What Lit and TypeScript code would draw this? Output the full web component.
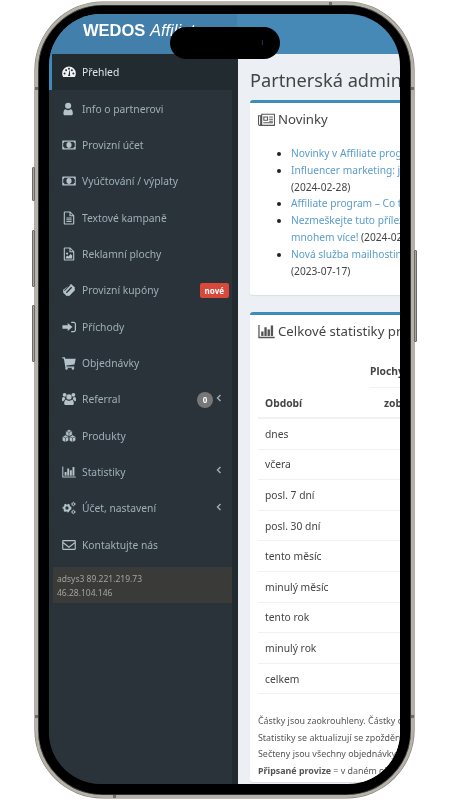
import { LitElement, html, css, svg } from "lit";
import { customElement } from "lit/decorators.js";

const cube = (x: number, y: number) => svg`
  <path d="M${x} ${y - 4.2}l3.700 1.700v4.600L${x} ${y + 4.200}l-3.700-1.700v-4.600Z" stroke="#293339" stroke-width=".7"/>
  <path d="M${x - 3.700} ${y - 2.500}L${x} ${y - 0.800}l3.700-1.700M${x} ${y - 0.800}v5" fill="none" stroke="#293339" stroke-width=".7"/>`;

const gear = (x: number, y: number, r: number, t: number) => svg`
  <circle cx=${x} cy=${y} r=${r} fill="none" stroke="currentColor" stroke-width=${r * 0.75}/>
  <circle cx=${x} cy=${y} r=${r * 1.45} fill="none" stroke="currentColor" stroke-width=${r * 0.5} stroke-dasharray=${t}/>`;

const icons: Record<string, any> = {
  dashboard: svg`<path fill-rule="evenodd" d="M8 1.800A7.800 7.800 0 0 0 .2 9.600c0 1.400.3 2.700 1 3.800.1.200.3.300.5.300h12.600c.2 0 .4-.1.500-.3.700-1.100 1-2.400 1-3.800A7.800 7.800 0 0 0 8 1.800ZM3 10.900a1.100 1.100 0 1 1 0-2.200 1.100 1.100 0 0 1 0 2.200Zm1.700-3.800a1.100 1.100 0 1 1 0-2.200 1.100 1.100 0 0 1 0 2.200ZM8 5.400a1.100 1.100 0 1 1 0-2.200 1.100 1.100 0 0 1 0 2.200Zm1.300 7.300H6.700L7.500 11l1-4.600h.7l-.1 4.700c.3.400.4 1 .2 1.600Zm2-5.600a1.100 1.100 0 1 1 0-2.200 1.100 1.100 0 0 1 0 2.200Zm1.700 3.800a1.100 1.100 0 1 1 0-2.200 1.100 1.100 0 0 1 0 2.200Z"/>`,
  user: svg`<circle cx="7" cy="4.300" r="3.500"/><path d="M3.300 15c-1 0-1.700-.7-1.700-1.700 0-2.700.7-5.100 2.700-5.100.8.700 1.600 1.100 2.700 1.100s1.900-.4 2.700-1.100c2 0 2.700 2.400 2.700 5.100 0 1-.7 1.700-1.700 1.700Z"/>`,
  money: svg`<path fill-rule="evenodd" d="M1 2.800h14c.4 0 .7.300.7.700v9c0 .4-.3.700-.7.700H1c-.4 0-.7-.3-.7-.7v-9c0-.4.300-.7.700-.7Zm1.600 1.500c0 .9-.7 1.500-1.200 1.500v4.400c.8 0 1.400.6 1.400 1.500h10.400c0-.9.600-1.500 1.400-1.500V5.800c-.5 0-1.200-.6-1.200-1.500ZM8 4.600c1.800 0 3 1.500 3 3.400s-1.200 3.400-3 3.400S5 9.900 5 8s1.200-3.400 3-3.400Z"/><rect x="7.200" y="6" width="1.600" height="4"/>`,
  file: svg`<path fill-rule="evenodd" d="M3 .5h6.500L14 5V14.700c0 .5-.3.800-.8.800H2.800c-.5 0-.8-.3-.8-.8V1.300c0-.5.500-.8 1-.8Zm.3 1.300v12.400h9.400V6H8.500V1.800Zm6.500.5V4.800h2.400ZM5 7.500h6v1H5Zm0 2h6v1H5Zm0 2h6v1H5Z"/>`,
  image: svg`<path fill-rule="evenodd" d="M3 .5h6.500L14 5V14.700c0 .5-.3.800-.8.800H2.800c-.5 0-.8-.3-.8-.8V1.300c0-.5.500-.8 1-.8Zm.3 1.300v12.400h9.400V6H8.500V1.800Zm6.500.5V4.800h2.400Z"/><circle cx="5.800" cy="7.500" r="1.300"/><path d="M4.400 13v-1.700l1.700-1.500 1.100 1.100 2.700-2.900 1.700 1.700V13Z"/>`,
  ticket: svg`<path fill-rule="evenodd" d="M10.500 1 15 5.500c-.7.700-.7 1.800 0 2.500L8 15c-.7-.7-1.800-.7-2.500 0L1 10.500c.7-.7.7-1.800 0-2.500Zm0 3.400L4.400 10.500 5.500 11.600l6.100-6.100ZM3 9 9.500 2.500 8.900 1.900 2.400 8.400Z"/>`,
  signin: svg`<path d="M6.500 3.500V6H.5v4h6v2.500L12 8Z"/><path d="M10.500 2h2.700C14.800 2 16 3.200 16 4.800v6.400c0 1.600-1.200 2.800-2.800 2.800h-2.700v-1.400h2.700c.8 0 1.400-.6 1.400-1.400V4.800c0-.8-.6-1.400-1.400-1.400h-2.700Z"/>`,
  cart: svg`<path d="M.3 1.500h3l.5 1.600H15.700L14.300 9.800 4.900 10.900 5.200 12H14v1.300H3.900L2.100 2.800H.3Z"/><circle cx="5.200" cy="14.200" r="1.400"/><circle cx="12.500" cy="14.200" r="1.400"/>`,
  users: svg`<circle cx="8" cy="5.600" r="3"/><circle cx="3" cy="3.200" r="2.200"/><circle cx="13" cy="3.200" r="2.200"/><path d="M3.800 14.800c-.8 0-1.300-.5-1.300-1.300 0-2.300.5-4.700 2.400-4.700.7.700 1.900 1.200 3.100 1.200s2.400-.5 3.100-1.200c1.900 0 2.400 2.400 2.400 4.700 0 .8-.5 1.300-1.300 1.300Z"/><path d="M0 8.500c0-1.500.3-2.900 1.600-2.900.4.300.9.500 1.400.5.100.8.400 1.600 1 2.100-1.200.3-1.900 1.100-2.300 2.300H.9c-.5 0-.9-.4-.9-1Zm16 0c0-1.500-.3-2.900-1.600-2.900-.4.300-.9.500-1.400.5-.1.800-.4 1.600-1 2.100 1.200.3 1.900 1.100 2.300 2.300h.8c.5 0 .9-.4.900-1Z"/>`,
  cubes: svg`${cube(8, 4.700)}${cube(4, 11)}${cube(12, 11)}`,
  chart: svg`<path d="M.3 1.800h1.200v11.200h14.200v1.300H.3Z"/><rect x="3" y="8" width="2.200" height="4.200"/><rect x="6" y="4" width="2.200" height="8.200"/><rect x="9" y="6" width="2.200" height="6.200"/><rect x="12" y="2.300" width="2.200" height="9.900"/>`,
  cogs: svg`${gear(5.700, 8, 3, 2.100)}${gear(13, 3.500, 1.500, 1.100)}${gear(13, 12.500, 1.500, 1.100)}`,
  mail: svg`<path fill-rule="evenodd" d="M1.500 2.300h13c.7 0 1.300.6 1.300 1.300v8.800c0 .7-.6 1.300-1.300 1.300h-13c-.7 0-1.300-.6-1.300-1.300V3.600c0-.7.600-1.300 1.300-1.300Zm0 1.300v1.100L8 9.700l6.500-5V3.600Zm0 2.800v6h13v-6L8 11.300Z"/>`,
  news: svg`<path fill-rule="evenodd" d="M3 2.500h12.500c.3 0 .5.200.5.500v10.500c0 .3-.2.500-.5.500H1.500C.7 14 0 13.300 0 12.500V4h3Zm1 1v9c0 .2 0 .4-.1.500H15V3.500ZM1 5v7.500c0 .3.200.5.500.500s.5-.2.500-.5V5Zm4 .2h4.500v4H5Zm1 1v2h2.500v-2Zm4.500-1H14v1h-3.500Zm0 2H14v1h-3.500Zm0 2H14v1h-3.500ZM5 10.500h9v1H5Z"/>`,
};

const icon = (name: string) =>
  html`<svg class="ico" viewBox="0 0 16 16" fill="currentColor" aria-hidden="true">${icons[name]}</svg>`;

const menu = [
  { i: "dashboard", t: "Přehled", active: true },
  { i: "user", t: "Info o partnerovi" },
  { i: "money", t: "Provizní účet" },
  { i: "money", t: "Vyúčtování / výplaty" },
  { i: "file", t: "Textové kampaně" },
  { i: "image", t: "Reklamní plochy" },
  { i: "ticket", t: "Provizní kupóny", label: "nové" },
  { i: "signin", t: "Příchody" },
  { i: "cart", t: "Objednávky" },
  { i: "users", t: "Referral", badge: "0", chev: true },
  { i: "cubes", t: "Produkty" },
  { i: "chart", t: "Statistiky", chev: true },
  { i: "cogs", t: "Účet, nastavení", chev: true },
  { i: "mail", t: "Kontaktujte nás" },
];

const periods = ["dnes", "včera", "posl. 7 dní", "posl. 30 dní", "tento měsíc", "minulý měsíc", "tento rok", "minulý rok", "celkem"];

@customElement("app-root")
export class AppRoot extends LitElement {
  static styles = css`
    :host {
      display: block;
      width: 450px;
      height: 802px;
      background: #fff;
      padding: 2px 36px 4px 35px;
      box-sizing: border-box;
      overflow: hidden;
      font-family: "Noto Sans", "Open Sans", sans-serif;
    }
    .phone {
      position: relative;
      width: 379px;
      height: 796px;
      box-sizing: border-box;
      padding: 9px 11px;
      background: #000;
      border: 3px solid #b5b2aa;
      border-radius: 68px;
      box-shadow: 0 0 0 0.6px #7b7971, inset 0 0 0 0.6px #5d5b55;
    }
    .btn { position: absolute; background: #a8a59d; border: 0.5px solid #6c6a64; box-sizing: border-box; width: 3px; border-radius: 1px; }
    .b1 { left: -6px; top: 162px; height: 34px; }
    .b2 { left: -6px; top: 225px; height: 57px; }
    .b3 { left: -6px; top: 300px; height: 57px; }
    .b4 { right: -6px; top: 245px; height: 92px; }
    .notch { position: absolute; background: #6f6d67; }
    .n1 { left: -3px; top: 82px; width: 3px; height: 3px; }
    .n2 { right: -3px; top: 82px; width: 3px; height: 3px; }
    .n3 { left: -3px; top: 710px; width: 3px; height: 3px; }
    .n4 { right: -3px; top: 710px; width: 3px; height: 3px; }
    .n5 { left: 291px; top: -3px; width: 3px; height: 3px; }
    .n6 { left: 75px; bottom: -3px; width: 3px; height: 3px; }
    .island {
      position: absolute;
      left: 132px;
      top: 22px;
      width: 110px;
      height: 32px;
      border-radius: 16px;
      background: #000;
      z-index: 3;
    }
    .island i {
      position: absolute;
      left: 92px;
      top: 13px;
      width: 1px;
      height: 5px;
      background: #2c2c52;
    }
    .screen {
      width: 351px;
      height: 770px;
      border-radius: 52px;
      overflow: hidden;
      display: flex;
      flex-direction: column;
      background: #222b30;
      filter: blur(0.3px);
    }
    .top { flex: none; height: 40px; display: flex; background: #4689b6; }
    .logo {
      flex: none;
      width: 188px;
      box-sizing: border-box;
      padding: 0 0 7px 34px;
      background: #427fab;
      color: #fff;
      font: bold 16.500px/33px "Liberation Sans", sans-serif;
      white-space: nowrap;
      overflow: hidden;
    }
    .logo em { font-weight: normal; }
    .body { flex: 1; display: flex; min-height: 0; }
    .side { flex: none; width: 183px; background: #293339; border-right: 6px solid #222b30; }
    .item {
      height: 36.350px;
      box-sizing: border-box;
      display: flex;
      align-items: center;
      padding-left: 13px;
      color: #9fb0b9;
      font-size: 10.300px;
      white-space: nowrap;
    }
    .item.active { background: #222b30; color: #dde5e9; border-left: 3px solid #3c8dbc; padding-left: 10px; }
    .item .ico { width: 14px; height: 14px; flex: none; margin-right: 6px; color: #b4c2ca; }
    .item.active .ico { color: #eef2f4; }
    .item .right { margin-left: auto; display: flex; align-items: center; padding-right: 7px; }
    .label {
      background: #d9493b;
      color: #fff;
      font-size: 8px;
      font-weight: 700;
      line-height: 15px;
      padding: 0 5px;
      border-radius: 2px;
      margin-right: -4px;
    }
    .badge {
      background: #777;
      color: #fff;
      font-size: 8px;
      font-weight: 700;
      width: 16px;
      height: 16px;
      line-height: 16px;
      text-align: center;
      border-radius: 50%;
      margin: 2px 2px 0 0;
    }
    .chev { width: 6px; height: 8px; fill: none; stroke: #9fb0b9; stroke-width: 1.400; margin: 0 3px 3px 1px; }
    .sys {
      margin: 4px 0 0 4px;
      padding: 5px 4px 0;
      height: 36px;
      box-sizing: border-box;
      background: #3a3b39;
      color: #a3a39b;
      font-size: 8.500px;
      line-height: 14.500px;
    }
    .main { flex: none; width: 300px; padding: 0 0 0 12px; box-sizing: border-box; color: #444; background: #ecf0f5; }
    h1 { margin: 14px 0 0; font-size: 18.200px; font-weight: 400; line-height: 24px; color: #444; white-space: nowrap; }
    .card {
      background: #fff;
      border-top: 3px solid #3c8dbc;
      border-radius: 3px;
      width: 290px;
      box-sizing: border-box;
      box-shadow: 0 1px 1px rgba(0, 0, 0, 0.08);
    }
    .news { margin-top: 8px; height: 195px; padding: 6px 8px; }
    .title { display: flex; align-items: center; font-size: 13.200px; line-height: 20px; color: #444; white-space: nowrap; }
    .title .ico { width: 17px; height: 17px; margin-right: 3px; flex: none; color: #555; }
    ul { margin: 16px 0 0; padding: 0 0 0 33px; font-size: 10.200px; line-height: 16.800px; white-space: nowrap; list-style: disc; }
    li::marker { color: #222; }
    a { color: #5a9ccb; text-decoration: none; }
    .stats { margin-top: 17px; height: 470px; padding: 6px 8px; }
    .sub { margin: 19px 0 0 112px; font-size: 10.300px; font-weight: 700; line-height: 22px; color: #444; padding-bottom: 5px; border-bottom: 1px solid #f1f1f1; width: 150px; white-space: nowrap; }
    .row {
      display: flex;
      align-items: center;
      height: 30.600px;
      box-sizing: border-box;
      padding-left: 7px;
      font-size: 10.300px;
      color: #444;
      border-bottom: 1px solid #f1f1f1;
    }
    .row.head { font-weight: 700; height: 31px; border-bottom-width: 2px; }
    .row.head span:last-child { margin-left: 80px; }
    .row.head span:first-child { width: 39px; }
    .notes { margin: 18.500px 0 0; font-size: 8.900px; line-height: 16.700px; color: #555; white-space: nowrap; }
    b { font-weight: 700; }
  `;

  render() {
    return html`
      <div class="phone">
        <span class="btn b1"></span><span class="btn b2"></span><span class="btn b3"></span><span class="btn b4"></span>
        <span class="notch n1"></span><span class="notch n2"></span><span class="notch n3"></span>
        <span class="notch n4"></span><span class="notch n5"></span><span class="notch n6"></span>
        <div class="island"><i></i></div>
        <div class="screen">
          <div class="top"><div class="logo">WEDOS <em>Affiliate</em></div></div>
          <div class="body">
            <nav class="side">
              ${menu.map(
                (m) => html`<div class="item ${m.active ? "active" : ""}">
                  ${icon(m.i)}<span>${m.t}</span>
                  ${m.label || m.badge || m.chev
                    ? html`<span class="right">
                        ${m.label ? html`<span class="label">${m.label}</span>` : ""}
                        ${m.badge ? html`<span class="badge">${m.badge}</span>` : ""}
                        ${m.chev ? html`<svg class="chev" viewBox="0 0 6 8"><path d="M4.500 1 1.500 4l3 3" /></svg>` : ""}
                      </span>`
                    : ""}
                </div>`
              )}
              <div class="sys">adsys3 89.221.219.73<br />46.28.104.146</div>
            </nav>
            <main class="main">
              <h1>Partnerská administrace</h1>
              <section class="card news">
                <div class="title">${icon("news")}<span>Novinky</span></div>
                <ul>
                  <li><a>Novinky v Affiliate programu</a></li>
                  <li><a>Influencer marketing: jak na to</a><br />(2024-02-28)</li>
                  <li><a>Affiliate program – Co to je</a></li>
                  <li><a>Nezmeškejte tuto příležitost</a><br /><a>mnohem více!</a> (2024-02-01)</li>
                  <li><a>Nová služba mailhosting</a><br />(2023-07-17)</li>
                </ul>
              </section>
              <section class="card stats">
                <div class="title">${icon("chart")}<span>Celkové statistiky provizí</span></div>
                <div class="sub">Plochy</div>
                <div class="row head"><span>Období</span><span>zobrazení</span></div>
                ${periods.map((p) => html`<div class="row">${p}</div>`)}
                <div class="notes">
                  Částky jsou zaokrouhleny. Částky od<br />
                  Statistiky se aktualizují se zpožděním<br />
                  Sečteny jsou všechny objednávky<br />
                  <b>Připsané provize</b> = v daném období
                </div>
              </section>
            </main>
          </div>
        </div>
      </div>
    `;
  }
}
